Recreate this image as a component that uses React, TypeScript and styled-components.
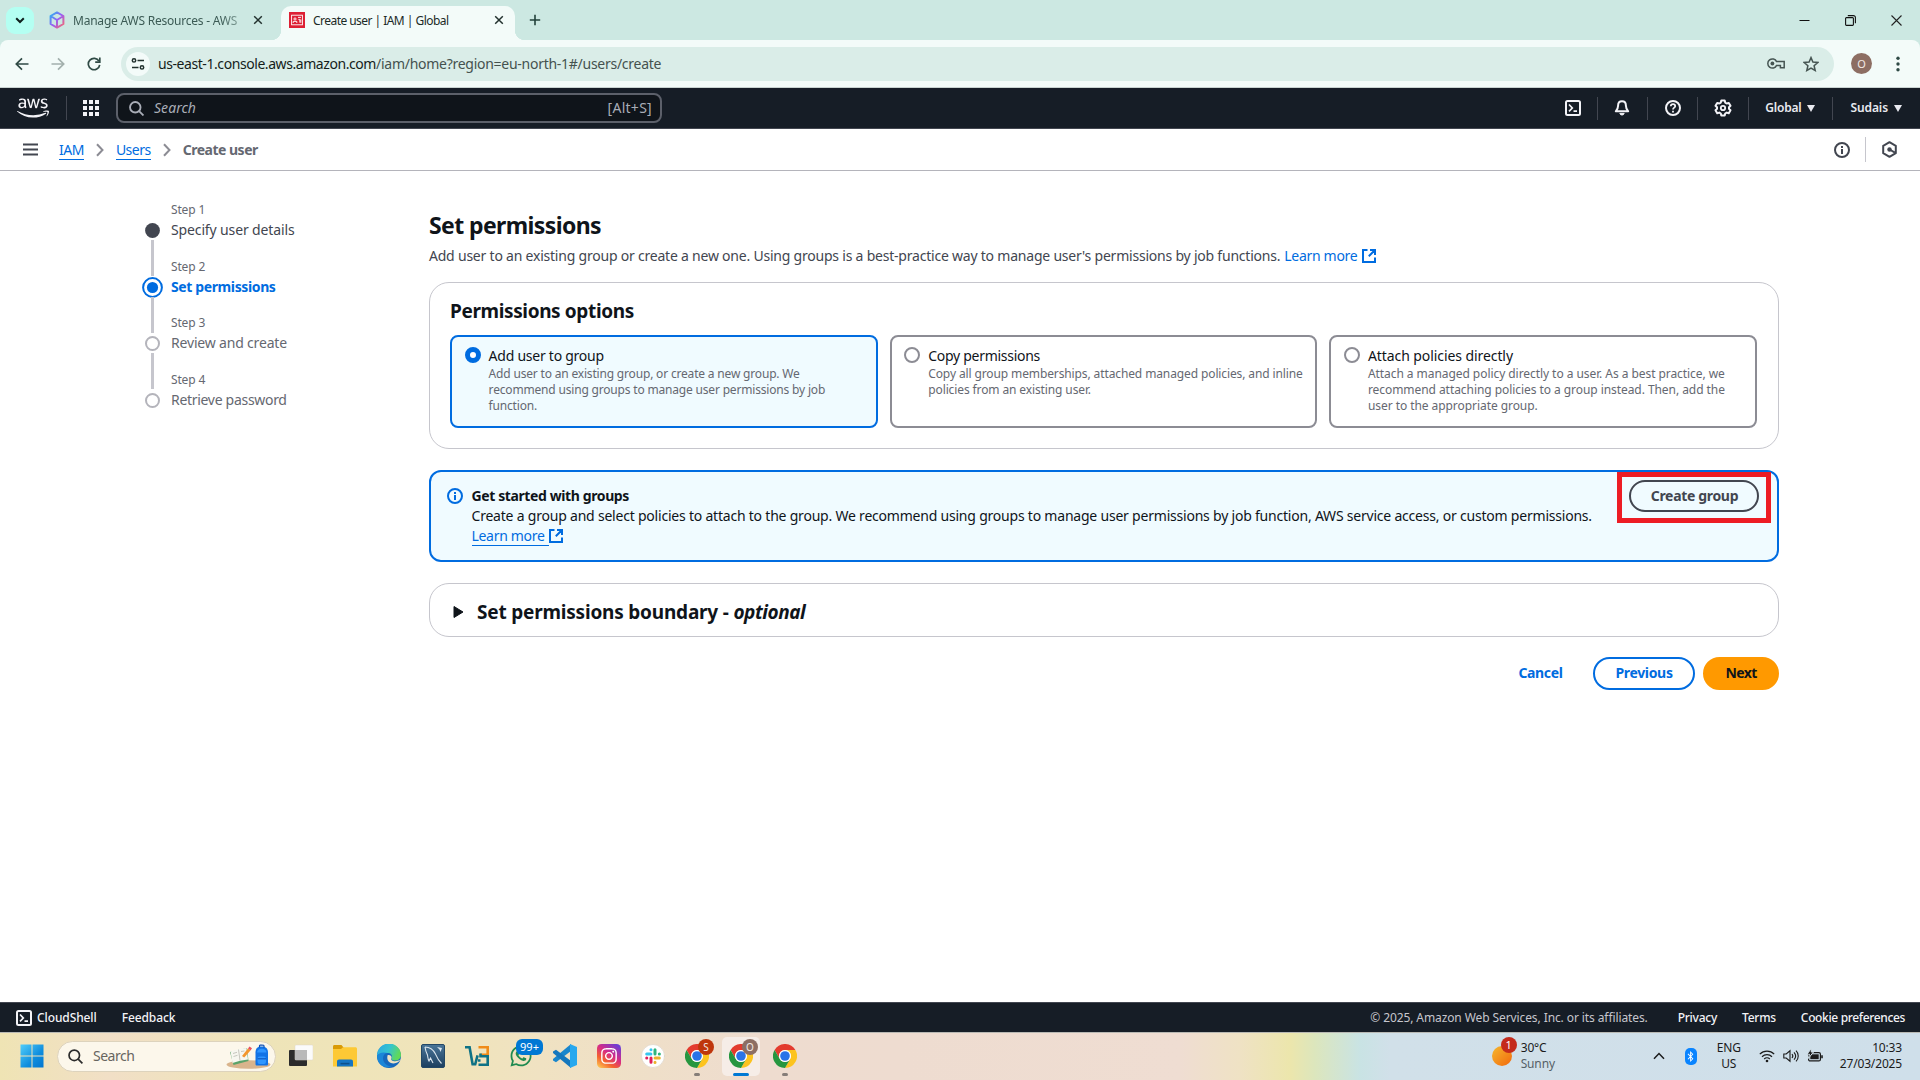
import React from 'react';
import styled, { createGlobalStyle, css } from 'styled-components';
import { FaAws, FaWhatsapp, FaInstagram, FaBluetoothB } from 'react-icons/fa';

const GlobalStyle = createGlobalStyle`
  *, *::before, *::after { box-sizing: border-box; }
  body { margin: 0; background: #fff; overflow: hidden; }
  svg { display: block; flex: none; }
`;

const type = (size: number, weight: number, color: string, spacing = 0, line = 20) => css`
  font-family: 'Noto Sans', 'Open Sans', sans-serif;
  font-size: ${size}px;
  font-weight: ${weight};
  color: ${color};
  letter-spacing: ${spacing}px;
  line-height: ${line}px;
  white-space: nowrap;
`;

const Screen = styled.div`
  width: 1920px;
  height: 1080px;
  display: flex;
  flex-direction: column;
  background: #fff;
`;

/* ---------- Browser window ---------- */

const TabStrip = styled.div`
  height: 40px;
  flex: none;
  display: flex;
  align-items: flex-end;
  background: #cce8e2;
  padding-left: 6px;
`;

const TabSearch = styled.div`
  width: 28px;
  height: 27px;
  border-radius: 9px;
  background: #b4fff2;
  display: flex;
  align-items: center;
  justify-content: center;
  margin: 0 7px 6px 0;
`;

const Tab = styled.div<{ $active?: boolean; $width: number; $end: number }>`
  position: relative;
  width: ${p => p.$width}px;
  height: 34px;
  display: flex;
  align-items: center;
  gap: 8px;
  padding: 0 ${p => p.$end}px 6px 8px;
  border-radius: 10px 10px 0 0;
  background: ${p => (p.$active ? '#f3fbf9' : 'transparent')};
  ${p => p.$active && css`
    &::before, &::after {
      content: '';
      position: absolute;
      bottom: 0;
      width: 10px;
      height: 10px;
    }
    &::before { left: -10px; background: radial-gradient(circle at 0 0, transparent 10px, #f3fbf9 10.5px); }
    &::after { right: -10px; background: radial-gradient(circle at 100% 0, transparent 10px, #f3fbf9 10.5px); }
  `}
`;

const TabTitle = styled.span<{ $fade?: boolean; $spacing: number }>`
  ${type(12, 400, '#1b2a27', 0, 18)}
  letter-spacing: ${p => p.$spacing}px;
  flex: 1;
  overflow: hidden;
  padding-top: 1px;
  ${p => p.$fade && css`
    color: #3c5b55;
    mask-image: linear-gradient(90deg, #000 86%, rgba(0, 0, 0, 0.3));
  `}
`;

const NewTab = styled.div`
  width: 40px;
  height: 34px;
  display: flex;
  justify-content: center;
  align-items: center;
  padding-bottom: 6px;
`;

const WindowButtons = styled.div`
  margin-left: auto;
  height: 40px;
  display: flex;
  align-items: center;
  gap: 35px;
  padding-right: 18px;
`;

const ToolbarBack = styled.div`
  background: #cce8e2;
  flex: none;
`;

const Toolbar = styled.div`
  height: 48px;
  display: flex;
  align-items: center;
  background: #f3fbf9;
  border-bottom: 1px solid #c9d3d1;
  border-radius: 8px 8px 0 0;
  padding-left: 15px;
  gap: 22px;
`;

const AddressBar = styled.div`
  margin-left: -2px;
  width: 1713px;
  height: 34px;
  border-radius: 17px;
  background: #daede8;
  display: flex;
  align-items: center;
  padding: 0 15px 0 5px;
`;

const SiteInfo = styled.div`
  width: 24px;
  height: 24px;
  border-radius: 50%;
  background: #f3fbf9;
  display: flex;
  align-items: center;
  justify-content: center;
  margin-right: 8px;
`;

const UrlHost = styled.span`${type(14, 400, '#151d1b', -0.43, 22)}`;
const UrlPath = styled.span`${type(14, 400, '#45524f', -0.27, 22)}`;

const AddressIcons = styled.div`
  margin-left: auto;
  display: flex;
  align-items: center;
  gap: 17px;
`;

const Avatar = styled.div<{ $size: number; $color: string; $font: number }>`
  ${type(11, 400, '#f3e9e6', 0, 14)}
  font-size: ${p => p.$font}px;
  width: ${p => p.$size}px;
  height: ${p => p.$size}px;
  border-radius: 50%;
  background: ${p => p.$color};
  display: flex;
  align-items: center;
  justify-content: center;
  flex: none;
`;

const ToolbarEnd = styled.div`
  display: flex;
  align-items: center;
  gap: 24px;
  margin-left: -5px;
`;

/* ---------- AWS header ---------- */

const AwsNav = styled.header`
  height: 41px;
  flex: none;
  display: flex;
  align-items: center;
  background: #161d26;
  border-bottom: 1px solid #424650;
  padding: 0 18px 0 17px;
  color: #f3f3f7;
`;

const Divider = styled.div<{ $height?: number; $color?: string; $x?: number }>`
  width: 1px;
  height: ${p => p.$height ?? 23}px;
  background: ${p => p.$color ?? '#424650'};
  margin: 0 ${p => p.$x ?? 16}px;
  flex: none;
`;

const NavSearch = styled.div`
  width: 546px;
  height: 30px;
  margin-left: 17px;
  border: 2px solid #5c606a;
  border-radius: 8px;
  background: #0f141a;
  display: flex;
  align-items: center;
  justify-content: space-between;
  padding: 0 8px 0 11px;
`;

const SearchHint = styled.span`
  ${type(14, 400, '#a9adb7', 0.04, 20)}
  display: flex;
  align-items: center;
  gap: 10px;
  font-style: italic;
`;
const Shortcut = styled.span`${type(14, 400, '#a9adb7', 0.28, 20)}`;

const NavRight = styled.div`
  margin-left: auto;
  display: flex;
  align-items: center;
`;

const NavMenu = styled.span<{ $spacing: number }>`
  ${type(12, 600, '#e9eaf0', 0, 20)}
  letter-spacing: ${p => p.$spacing}px;
  display: flex;
  align-items: center;
  gap: 6px;
`;

/* ---------- Breadcrumb bar ---------- */

const CrumbBar = styled.div`
  height: 42px;
  flex: none;
  display: flex;
  align-items: center;
  border-bottom: 1px solid #b4b4bb;
  padding: 0 22px 0 23px;
  color: #424650;
`;

const Crumbs = styled.nav`
  display: flex;
  align-items: center;
  margin-left: 21px;
  gap: 12px;
`;

const CrumbLink = styled.a`
  ${type(14, 400, '#006ce0', -0.5, 18)}
  border-bottom: 1px solid #006ce0;
  margin-top: 1px;
`;
const CrumbCurrent = styled.span`${type(14, 700, '#656871', -0.5, 20)}`;

const CrumbTools = styled.div`
  margin-left: auto;
  display: flex;
  align-items: center;
`;

/* ---------- Wizard ---------- */

const Page = styled.main`
  flex: 1;
  display: flex;
  align-items: flex-start;
  padding-left: 142px;
`;

const Steps = styled.ol`
  width: 287px;
  margin: 0;
  padding: 30px 0 0;
  list-style: none;
`;

const Step = styled.li`
  display: flex;
  gap: 8px;
  height: 56.7px;
`;

const StepMarker = styled.div`
  width: 21px;
  padding-top: 19px;
  display: flex;
  flex-direction: column;
  align-items: center;
`;

const StepLine = styled.div`
  width: 3px;
  height: 36px;
  margin-top: -1px;
  flex: none;
  background: #c6c6cd;
`;

const StepNumber = styled.div`${type(12, 400, '#656871', -0.15, 18)}`;

const StepTitle = styled.div<{ $state: string; $spacing: number }>`
  ${type(14, 400, '#656871', 0, 22)}
  letter-spacing: ${p => p.$spacing}px;
  ${p => p.$state === 'done' && css`color: #424650;`}
  ${p => p.$state === 'active' && css`color: #006ce0; font-weight: 700;`}
`;

const Content = styled.section`
  width: 1350px;
  padding-top: 39px;
`;

const Title = styled.h1`
  margin: 0;
  ${type(23, 700, '#0f141a', -0.6, 30)}
`;

const Intro = styled.p`
  margin: 5px 0 16px;
  display: flex;
  align-items: center;
  ${type(14, 400, '#424650', -0.216, 21)}
`;

const LearnMore = styled.a`
  ${type(14, 400, '#006ce0', -0.31, 20)}
  display: inline-flex;
  align-items: center;
  gap: 5px;
  margin-left: 4px;
`;

const Panel = styled.div`
  border: 1px solid #c6c6cd;
  border-radius: 20px;
  padding: 16px 21px 20px 20px;
`;

const PanelTitle = styled.h2`
  margin: 0 0 12px;
  ${type(19, 700, '#0f141a', -0.37, 24)}
`;

const Options = styled.div`
  display: grid;
  grid-template-columns: repeat(3, 1fr);
  gap: 12px;
`;

const OptionCard = styled.label<{ $selected?: boolean }>`
  height: 93px;
  border: 2px solid ${p => (p.$selected ? '#006ce0' : '#8c8c94')};
  border-radius: 8px;
  background: ${p => (p.$selected ? '#f0fbff' : '#fff')};
  display: flex;
  gap: 8px;
  padding: 8px 10px 0 12.6px;
`;

const Radio = styled.span<{ $selected?: boolean }>`
  width: 16px;
  height: 16px;
  margin-top: 2px;
  flex: none;
  border-radius: 50%;
  background: #fff;
  border: ${p => (p.$selected ? '5px solid #006ce0' : '2px solid #8c8c94')};
`;

const OptionLabel = styled.div<{ $spacing: number }>`
  ${type(14, 400, '#0f141a', 0, 21)}
  letter-spacing: ${p => p.$spacing}px;
`;
const OptionText = styled.div<{ $spacing: number }>`
  ${type(12, 400, '#656871', 0, 16)}
  letter-spacing: ${p => p.$spacing}px;
  white-space: pre-line;
`;

const Alert = styled.div`
  margin-top: 21px;
  height: 92px;
  border: 2px solid #006ce0;
  border-radius: 12px;
  background: #f0fbff;
  display: flex;
  align-items: flex-start;
  gap: 8.5px;
  padding: 14px 18px 0 16px;
`;

const AlertIcon = styled.div`
  padding-top: 2px;
  color: #006ce0;
`;
const AlertBody = styled.div`flex: 1;`;
const AlertTitle = styled.div`${type(14, 700, '#0f141a', -0.39, 20)}`;
const AlertText = styled.div`${type(14, 400, '#0f141a', -0.212, 20)}`;

const AlertLink = styled.a`
  ${type(14, 400, '#006ce0', -0.31, 20)}
  display: flex;
  align-items: center;
`;
const Underlined = styled.span`
  border-bottom: 1px solid #006ce0;
  line-height: 19px;
  padding-right: 4px;
`;

const Button = styled.button<{ $kind?: string; $width: number }>`
  ${type(14, 700, '#006ce0', -0.33, 20)}
  width: ${p => p.$width}px;
  height: 33px;
  padding: 0 0 1px;
  border-radius: 20px;
  border: 2px solid transparent;
  background: transparent;
  ${p => p.$kind === 'outline' && css`border-color: #006ce0; background: #fff;`}
  ${p => p.$kind === 'dark' && css`border-color: #424650; color: #424650; height: 32px; padding: 0 0 0 1px;`}
  ${p => p.$kind === 'primary' && css`background: #ff9900; border-color: #ff9900; color: #0f141a; letter-spacing: -0.6px;`}
`;

const Callout = styled.div`
  position: relative;
  margin-top: -6px;
  &::after {
    content: '';
    position: absolute;
    inset: -8px -12px -11px -12px;
    border: 5px solid #ed1c24;
  }
`;

const Boundary = styled.div`
  margin-top: 21px;
  height: 54px;
  border: 1px solid #c6c6cd;
  border-radius: 20px;
  display: flex;
  align-items: center;
  padding: 3px 0 0 23px;
  gap: 13px;
`;

const BoundaryTitle = styled.h2`
  margin: 0;
  ${type(19, 700, '#0f141a', -0.2, 24)}
  em { letter-spacing: -0.43px; }
`;

const Actions = styled.div`
  margin-top: 20px;
  display: flex;
  justify-content: flex-end;
  gap: 8px;
`;

/* ---------- AWS footer ---------- */

const Footer = styled.footer`
  height: 30px;
  flex: none;
  display: flex;
  align-items: center;
  background: #161d26;
  border-top: 1px solid #424650;
  padding: 0 15px 0 16px;
  color: #f3f3f7;
`;

const FooterLink = styled.span<{ $left?: number; $spacing?: number }>`
  ${type(12, 500, '#f3f3f7', 0, 20)}
  letter-spacing: ${p => p.$spacing ?? 0}px;
  margin-left: ${p => p.$left ?? 0}px;
  padding-top: 1px;
`;

const Copyright = styled.span`
  ${type(12, 400, '#c6c6cd', -0.097, 20)}
  margin-left: auto;
  padding-top: 1px;
`;

/* ---------- Windows taskbar ---------- */

const Taskbar = styled.div`
  height: 48px;
  flex: none;
  display: flex;
  align-items: center;
  border-top: 1px solid #b9b9b4;
  background: linear-gradient(90deg, #efe4b4 0, #f1dfc6 110px, #eee4b8 260px, #f0e4bb 460px, #f0e2c2 540px,
    #eedccf 760px, #eedcd0 900px, #efddd2 1180px, #efe2c4 1240px, #ece6ac 1290px, #dce6bd 1315px, #c9e3e4 1360px,
    #d1e0e9 1390px, #cfdfea 1920px);
  padding: 0 18px 1px 20px;
`;

const TaskSearch = styled.div`
  width: 219px;
  height: 31px;
  margin-left: 13px;
  border-radius: 16px;
  background: #fcf7eb;
  border: 1px solid #ddd3bd;
  display: flex;
  align-items: center;
  padding: 0 4px 0 10px;
  gap: 10px;
  color: #2b2b2b;
`;

const TaskSearchText = styled.span`
  ${type(14, 400, '#67655f', -0.5, 20)}
  flex: 1;
`;

const Apps = styled.div`
  display: flex;
  align-items: center;
  gap: 6px;
  margin-left: 6px;
`;

const TaskApp = styled.div<{ $active?: boolean }>`
  position: relative;
  width: 38px;
  height: 39px;
  border-radius: 5px;
  display: flex;
  align-items: center;
  justify-content: center;
  background: ${p => (p.$active ? '#f6ede7' : 'transparent')};
  svg { width: 24px; height: 24px; }
`;

const Running = styled.i<{ $active?: boolean }>`
  position: absolute;
  bottom: 0;
  left: 50%;
  transform: translateX(-50%);
  width: ${p => (p.$active ? 16 : 6)}px;
  height: 3px;
  border-radius: 2px;
  background: ${p => (p.$active ? '#0078d4' : '#857d78')};
`;

const CountBadge = styled.span`
  ${type(11, 400, '#fff', 0, 15)}
  position: absolute;
  top: 2px;
  left: 14px;
  width: 27px;
  height: 16px;
  border-radius: 6px;
  background: #0078d4;
  text-align: center;
`;

const ProfileBadge = styled.span`
  position: absolute;
  top: 2px;
  left: 20px;
`;

const Weather = styled.div`
  margin-left: auto;
  display: flex;
  align-items: center;
  gap: 9px;
  width: 161px;
`;

const Sun = styled.div`
  position: relative;
  width: 20px;
  height: 20px;
  border-radius: 50%;
  background: linear-gradient(135deg, #f5b82e, #f2680c);
`;

const SunBadge = styled.span`
  ${type(11, 400, '#fff', 0, 15)}
  position: absolute;
  left: 9px;
  top: -9px;
  width: 16px;
  height: 16px;
  border-radius: 50%;
  background: #c42b1c;
  text-align: center;
`;

const TrayText = styled.div<{ $align?: string }>`
  ${type(12, 400, '#1b1b1b', -0.16, 16)}
  text-align: ${p => p.$align ?? 'left'};
`;
const Muted = styled.span`color: #566067;`;

const Bluetooth = styled.div`
  width: 12px;
  height: 17px;
  margin: 0 20px;
  border-radius: 5px;
  background: #0a84ff;
  color: #fff;
  display: flex;
  align-items: center;
  justify-content: center;
  font-size: 11px;
`;

const TrayIcons = styled.div`
  display: flex;
  align-items: center;
  gap: 8px;
  margin: 0 17px 0 18px;
  color: #1b1b1b;
`;

/* ---------- Icons ---------- */

const Svg = ({ w, h, box, children }: { w: number; h?: number; box?: string; children: React.ReactNode }) => (
  <svg width={w} height={h ?? w} viewBox={box ?? '0 0 16 16'} fill="none" stroke="currentColor" strokeWidth="2">
    {children}
  </svg>
);

const Close = () => (
  <Svg w={10} box="0 0 10 10"><path d="M1.2 1.2l7.6 7.6M8.8 1.2L1.2 8.8" stroke="#22312e" strokeWidth="1.5" /></Svg>
);

const External = () => (
  <Svg w={14} box="0 0 14 14"><path d="M5.5 1H1v12h12V8.5M8 1h5v5M13 1L6.8 7.2" /></Svg>
);

const Terminal = () => (
  <Svg w={16}>
    <rect x="1" y="1" width="14" height="14" rx="1.5" />
    <path d="M4 4.5L7.3 8 4 11.3M8.5 11.2H12" strokeWidth="1.7" />
  </Svg>
);

const Info = () => (
  <Svg w={16}>
    <circle cx="8" cy="8" r="7" />
    <path d="M8 7v5M8 4v2" />
  </Svg>
);

const Magnifier = ({ width = 2 }: { width?: number }) => (
  <Svg w={15}><circle cx="6.7" cy="6.7" r="5.6" strokeWidth={width} /><path d="M10.8 10.8l4.6 4.6" strokeWidth={width} /></Svg>
);

const Chevron = () => (
  <Svg w={8} h={14} box="0 0 8 14"><path d="M1 1.2L6.5 7 1 12.8" stroke="#8c8c94" /></Svg>
);

const Caret = () => (
  <Svg w={8} h={7} box="0 0 8 7"><path d="M0 0h8L4 7z" fill="currentColor" stroke="none" /></Svg>
);

const Chrome = () => (
  <svg viewBox="0 0 24 24">
    <path d="M1.6 6A12 12 0 0 1 22.4 6H12A6 6 0 0 0 6.8 15z" fill="#e33b2e" />
    <path d="M22.4 6A12 12 0 0 1 12 24L17.2 15A6 6 0 0 0 12 6z" fill="#fcc31e" />
    <path d="M12 24A12 12 0 0 1 1.6 6L6.8 15A6 6 0 0 0 17.2 15z" fill="#26963f" />
    <circle cx="12" cy="12" r="6" fill="#fff" />
    <circle cx="12" cy="12" r="4.8" fill="#2a73e8" />
  </svg>
);

const Marker = ({ state }: { state: string }) => (
  <svg width="21" height="21" viewBox="0 0 21 21" fill="none">
    {state === 'done' && <circle cx="10.5" cy="10.5" r="7.4" fill="#424650" />}
    {state === 'active' && (
      <>
        <circle cx="10.5" cy="10.5" r="9.4" stroke="#006ce0" strokeWidth="2" />
        <circle cx="10.5" cy="10.5" r="5.6" fill="#006ce0" />
      </>
    )}
    {state === 'todo' && <circle cx="10.5" cy="10.5" r="6.5" stroke="#b4b4bb" strokeWidth="2" />}
  </svg>
);

const steps = [
  { title: 'Specify user details', state: 'done', spacing: -0.13 },
  { title: 'Set permissions', state: 'active', spacing: -0.38 },
  { title: 'Review and create', state: 'todo', spacing: -0.18 },
  { title: 'Retrieve password', state: 'todo', spacing: -0.3 },
];

const options = [
  {
    label: 'Add user to group',
    labelSpacing: -0.25,
    textSpacing: -0.18,
    text: 'Add user to an existing group, or create a new group. We\nrecommend using groups to manage user permissions by job\nfunction.',
  },
  {
    label: 'Copy permissions',
    labelSpacing: -0.28,
    textSpacing: -0.115,
    text: 'Copy all group memberships, attached managed policies, and inline\npolicies from an existing user.',
  },
  {
    label: 'Attach policies directly',
    labelSpacing: -0.08,
    textSpacing: -0.06,
    text: 'Attach a managed policy directly to a user. As a best practice, we\nrecommend attaching policies to a group instead. Then, add the\nuser to the appropriate group.',
  },
];

const BrowserChrome = () => (
  <>
    <TabStrip>
      <TabSearch>
        <Svg w={10} h={7} box="0 0 10 7"><path d="M1.2 1.2L5 5l3.8-3.8" stroke="#10201d" /></Svg>
      </TabSearch>
      <Tab $width={240} $end={18}>
        <svg width="16" height="18" viewBox="0 0 16 18" fill="none" strokeWidth="2" strokeLinejoin="round">
          <defs>
            <linearGradient id="cube" x1="0" y1="0" x2="1" y2="1">
              <stop offset="0" stopColor="#22b8f0" />
              <stop offset="0.5" stopColor="#9a5cf5" />
              <stop offset="1" stopColor="#fb6a6a" />
            </linearGradient>
          </defs>
          <path d="M8 1.4L14.4 5v8L8 16.6 1.6 13V5zM1.6 5L8 9l6.4-4M8 9v7.6" stroke="url(#cube)" />
        </svg>
        <TabTitle $fade $spacing={-0.22}>Manage AWS Resources - AWS</TabTitle>
        <Close />
      </Tab>
      <Tab $active $width={234} $end={11}>
        <svg width="16" height="16" viewBox="0 0 16 16" fill="none" stroke="#fff" strokeWidth="0.9">
          <rect width="16" height="16" fill="#dd2034" stroke="none" />
          <rect x="2.6" y="3.2" width="10.8" height="9.6" />
          <circle cx="6" cy="7" r="1.1" />
          <path d="M4.2 11V9.4h3.6V11M9 5.4h3M9.4 7.4h1.4v3.2M11.8 7.4v3.4" />
        </svg>
        <TabTitle $spacing={-0.54}>Create user | IAM | Global</TabTitle>
        <Close />
      </Tab>
      <NewTab>
        <Svg w={12} box="0 0 12 12"><path d="M6 .8v10.4M.8 6h10.4" stroke="#22413b" strokeWidth="1.6" /></Svg>
      </NewTab>
      <WindowButtons>
        <Svg w={11} box="0 0 11 11"><path d="M.5 5.5h10" stroke="#111" strokeWidth="1" /></Svg>
        <Svg w={11} box="0 0 11 11">
          <path d="M.6 3.4a.8.8 0 0 1 .8-.8h6.2a.8.8 0 0 1 .8.8v6.2a.8.8 0 0 1-.8.8H1.4a.8.8 0 0 1-.8-.8zM2.8.6h5.6a2 2 0 0 1 2 2v5.6" stroke="#111" strokeWidth="1.1" />
        </Svg>
        <Svg w={11} box="0 0 11 11"><path d="M.5.5l10 10M10.5.5l-10 10" stroke="#222" strokeWidth="1.1" /></Svg>
      </WindowButtons>
    </TabStrip>
    <ToolbarBack>
      <Toolbar>
        <Svg w={14} box="0 0 14 14"><path d="M13.5 7H1.5M7 1.3L1.3 7 7 12.7" stroke="#2f4a45" strokeWidth="1.7" /></Svg>
        <Svg w={14} box="0 0 14 14"><path d="M.5 7h12M7 1.3L12.7 7 7 12.7" stroke="#a3b0ad" strokeWidth="1.7" /></Svg>
        <Svg w={14} box="0 0 14 14">
          <path d="M12 4.2A5.7 5.7 0 1 0 12.7 7.8" stroke="#2f4a45" strokeWidth="1.7" />
          <path d="M12.8.6v4.6H8.2" stroke="#2f4a45" strokeWidth="1.7" />
        </Svg>
        <AddressBar>
          <SiteInfo>
            <Svg w={14} box="0 0 14 14">
              <circle cx="3" cy="3.4" r="1.7" stroke="#22312e" strokeWidth="1.5" />
              <circle cx="11" cy="10.4" r="1.7" stroke="#22312e" strokeWidth="1.5" />
              <path d="M6.5 3.4H13M1 10.4h6.5" stroke="#22312e" strokeWidth="1.5" />
            </Svg>
          </SiteInfo>
          <UrlHost>us-east-1.console.aws.amazon.com</UrlHost>
          <UrlPath>/iam/home?region=eu-north-1#/users/create</UrlPath>
          <AddressIcons>
            <Svg w={19} h={11} box="0 0 19 11">
              <path d="M9.6 3.6a4.6 4.6 0 1 0 0 3.8h3.8v2.3h3.8V3.6z" stroke="#465552" strokeWidth="1.5" />
              <circle cx="5.4" cy="5.5" r="1.9" fill="#465552" stroke="none" />
            </Svg>
            <Svg w={16}>
              <path d="M8 1.6l1.9 4.5 4.9.4-3.7 3.2 1.1 4.8L8 12l-4.2 2.5 1.1-4.8L1.2 6.5l4.9-.4z" stroke="#465552" strokeWidth="1.5" />
            </Svg>
          </AddressIcons>
        </AddressBar>
        <ToolbarEnd>
          <Avatar $size={21} $color="#8d6e63" $font={11}>O</Avatar>
          <Svg w={4} h={16} box="0 0 4 16">
            <g fill="#2f4a45" stroke="none"><circle cx="2" cy="2.2" r="1.7" /><circle cx="2" cy="8" r="1.7" /><circle cx="2" cy="13.8" r="1.7" /></g>
          </Svg>
        </ToolbarEnd>
      </Toolbar>
    </ToolbarBack>
  </>
);

const Header = () => (
  <AwsNav>
    <FaAws style={{ width: 32, height: 26 }} />
    <Divider $height={24} $x={16.5} />
    <svg width="16" height="16" viewBox="0 0 16 16" fill="currentColor">
      {[0, 6, 12].map(y => [0, 6, 12].map(x => <rect key={`${x}-${y}`} x={x} y={y} width="4" height="4" />))}
    </svg>
    <NavSearch>
      <SearchHint><Magnifier />Search</SearchHint>
      <Shortcut>[Alt+S]</Shortcut>
    </NavSearch>
    <NavRight>
      <Terminal />
      <Divider />
      <Svg w={16}>
        <path d="M8 1.2c-2.6 0-3.9 1.8-3.9 4.2 0 3-1 4.4-2.3 5.9h12.4c-1.3-1.5-2.3-2.9-2.3-5.9C11.9 3 10.6 1.2 8 1.2z" strokeLinejoin="round" />
        <path d="M5.8 13.4a2.3 2.3 0 0 0 4.4 0z" fill="currentColor" strokeWidth="1" />
      </Svg>
      <Divider $x={17} />
      <Svg w={16}>
        <circle cx="8" cy="8" r="7" />
        <path d="M5.8 6.3c0-1.3 1-2.1 2.2-2.1s2.2.8 2.2 2c0 1.4-2.2 1.5-2.2 3.3M8 10.8v1.6" strokeWidth="1.8" />
      </Svg>
      <Divider />
      <Svg w={18} box="0 0 18 18">
        <path d="M7.3 1.5h3.4l.5 2.1 1.5.9 2.1-.6 1.7 2.9L15 8.300v1.5l1.500 1.500-1.700 2.900-2.100-.6-1.500.9-.5 2H7.300l-.5-2-1.500-.9-2.100.6-1.700-2.900L3 9.800V8.300L1.500 6.800l1.700-2.900 2.100.6 1.500-.9z" strokeLinejoin="round" />
        <circle cx="9" cy="9" r="2.2" strokeWidth="1.8" />
      </Svg>
      <Divider />
      <NavMenu $spacing={-0.24}>Global <Caret /></NavMenu>
      <Divider $x={17} />
      <NavMenu $spacing={-0.08}>Sudais <Caret /></NavMenu>
    </NavRight>
  </AwsNav>
);

const Breadcrumb = () => (
  <CrumbBar>
    <Svg w={15} h={13} box="0 0 15 13"><path d="M0 1.5h15M0 6.5h15M0 11.5h15" /></Svg>
    <Crumbs>
      <CrumbLink>IAM</CrumbLink>
      <Chevron />
      <CrumbLink>Users</CrumbLink>
      <Chevron />
      <CrumbCurrent>Create user</CrumbCurrent>
    </Crumbs>
    <CrumbTools>
      <Info />
      <Divider $height={25} $color="#c6c6cd" $x={15} />
      <Svg w={17} box="0 0 17 17">
        <path d="M8.5 1.2l6.3 3.6v7.4l-6.3 3.6-6.3-3.6V4.8z" strokeLinejoin="round" />
        <circle cx="8.5" cy="8.5" r="2.2" fill="currentColor" stroke="none" />
        <path d="M8.5 8.5l5.5 3.2" />
      </Svg>
    </CrumbTools>
  </CrumbBar>
);

const Wizard = () => (
  <Page>
    <Steps>
      {steps.map((s, i) => (
        <Step key={s.title}>
          <StepMarker>
            <Marker state={s.state} />
            {i < steps.length - 1 && <StepLine />}
          </StepMarker>
          <div>
            <StepNumber>Step {i + 1}</StepNumber>
            <StepTitle $state={s.state} $spacing={s.spacing}>{s.title}</StepTitle>
          </div>
        </Step>
      ))}
    </Steps>
    <Content>
      <Title>Set permissions</Title>
      <Intro>
        Add user to an existing group or create a new one. Using groups is a best-practice way to manage user's permissions by job functions.
        <LearnMore>Learn more <External /></LearnMore>
      </Intro>
      <Panel>
        <PanelTitle>Permissions options</PanelTitle>
        <Options>
          {options.map((o, i) => (
            <OptionCard key={o.label} $selected={i === 0}>
              <Radio $selected={i === 0} />
              <div>
                <OptionLabel $spacing={o.labelSpacing}>{o.label}</OptionLabel>
                <OptionText $spacing={o.textSpacing}>{o.text}</OptionText>
              </div>
            </OptionCard>
          ))}
        </Options>
      </Panel>
      <Alert>
        <AlertIcon><Info /></AlertIcon>
        <AlertBody>
          <AlertTitle>Get started with groups</AlertTitle>
          <AlertText>
            Create a group and select policies to attach to the group. We recommend using groups to manage user permissions by job function, AWS service access, or custom permissions.
          </AlertText>
          <AlertLink><Underlined>Learn more</Underlined><External /></AlertLink>
        </AlertBody>
        <Callout><Button $kind="dark" $width={130}>Create group</Button></Callout>
      </Alert>
      <Boundary>
        <svg width="11" height="12" viewBox="0 0 11 12"><path d="M1 .5L10 6 1 11.5z" fill="#0f141a" stroke="#0f141a" strokeLinejoin="round" /></svg>
        <BoundaryTitle>Set permissions boundary - <em>optional</em></BoundaryTitle>
      </Boundary>
      <Actions>
        <Button $width={89}>Cancel</Button>
        <Button $kind="outline" $width={102}>Previous</Button>
        <Button $kind="primary" $width={76}>Next</Button>
      </Actions>
    </Content>
  </Page>
);

const WindowsTaskbar = () => (
  <Taskbar>
    <svg width="24" height="24" viewBox="0 0 24 24">
      <defs>
        <linearGradient id="win" x1="0" y1="0" x2="24" y2="24" gradientUnits="userSpaceOnUse">
          <stop offset="0" stopColor="#54d0fb" />
          <stop offset="0.6" stopColor="#0f8ddd" />
          <stop offset="1" stopColor="#0074cf" />
        </linearGradient>
      </defs>
      <path d="M.5.5h11v11H.5zM12.500.5h11v11h-11zM.5 12.500h11v11H.5zM12.500 12.500h11v11h-11z" fill="url(#win)" />
    </svg>
    <TaskSearch>
      <Magnifier width={1.8} />
      <TaskSearchText>Search</TaskSearchText>
      <svg width="45" height="25" viewBox="0 0 45 25">
        <ellipse cx="22.5" cy="20.5" rx="22" ry="4.3" fill="#d9b48c" />
        <path d="M4 8l17-4 1.500 13-15 4z" fill="#5aa36a" />
        <path d="M4.500 7.500l8.500-2.500 7.500-1 1.500 11.500-8 1.200L6.500 19z" fill="#f7f7f0" />
        <path d="M12.500 5.500l1.500 11M7 9.500l4-1.200M7.500 12.500l4-1.200M15 7.500l3.500-.5" stroke="#b9b9b0" strokeWidth=".8" />
        <path d="M16 12L22 4.500l2.500 2-6.300 7z" fill="#f3962d" />
        <path d="M22 4.500l1.500-2 2.500 1.800-1.500 2.200z" fill="#e8525f" />
        <path d="M29.500 20V8.500C29.500 4 32 2.500 35.500 2.500S42 4 42 8.500V20c0 1-.5 1.500-1.500 1.500H31c-1 0-1.500-.5-1.500-1.500z" fill="#1273e6" />
        <path d="M33.500 3.500V1.700c0-.9 4.500-.9 4.500 0v1.800" stroke="#0b4fb5" strokeWidth="1.2" fill="none" />
        <path d="M31 8.500c0-5 9.500-5 9.500 0z" fill="#2f96ff" />
        <rect x="31.500" y="12.500" width="8.500" height="7.500" rx="2" fill="#2f96ff" />
        <path d="M31.500 14.800h8.500" stroke="#0b4fb5" />
      </svg>
    </TaskSearch>
    <Apps>
      <TaskApp>
        <svg viewBox="0 0 24 24">
          <rect x="0" y="6" width="18" height="16" rx="1" fill="#2b2b2b" />
          <rect x="6" y="1" width="18" height="15" rx="1" fill="#fbfbfb" stroke="#ddd6c8" strokeWidth=".5" />
          <rect x="6" y="6" width="12" height="10" fill="#b9b9b9" />
        </svg>
      </TaskApp>
      <TaskApp>
        <svg viewBox="0 0 24 24">
          <path d="M0 2.5C0 1.7.5 1 1.5 1h7l2 2.500V8H0z" fill="#d99a06" />
          <path d="M0 5h8l2-1.700h12.500c.8 0 1.500.7 1.500 1.500V22.500H0z" fill="#fdc935" />
          <path d="M4 22.500v-5c0-1.200.8-2 2-2h12c1.200 0 2 .8 2 2v5z" fill="#1475c4" />
          <rect x="7.500" y="18.800" width="9" height="1.600" fill="#0b4f8c" />
        </svg>
      </TaskApp>
      <TaskApp>
        <svg viewBox="0 0 24 24">
          <defs>
            <linearGradient id="edgeTop" x1="0" y1="0" x2="1" y2=".35">
              <stop offset="0" stopColor="#2aa5e4" />
              <stop offset=".55" stopColor="#35c3d0" />
              <stop offset="1" stopColor="#5fd95a" />
            </linearGradient>
          </defs>
          <circle cx="12" cy="12" r="12" fill="#1668bd" />
          <path d="M0 12A12 12 0 0 1 24 11c0 3.500-2.700 5.500-5.800 5.500-2.600 0-4-1.200-3.500-2.300.7-1.500.3-5.200-4-5.200C5.500 8.500 1 10 0 12z" fill="url(#edgeTop)" />
          <path d="M10.500 9C6 9.500 5 14.500 7 18c1.500 2.700 4.500 4.600 8 4.600C8 25 0 21 0 12c1-3 6-4.500 10.500-3z" fill="#1b86d8" />
          <path d="M14.500 14c-1 2 1 3.300 3.700 3.300 1.800 0 3.800-.5 5.300-1.700-1 2.300-3.800 3.900-6.800 3.900-5 0-7.500-4-6-8.500 2.500-.5 4.500 1.200 3.800 3z" fill="#efe4c4" />
        </svg>
      </TaskApp>
      <TaskApp>
        <svg viewBox="0 0 24 24" fill="none">
          <defs>
            <linearGradient id="sql" x1="0" y1="0" x2="0" y2="1"><stop stopColor="#4a7598" /><stop offset="1" stopColor="#1c3f5f" /></linearGradient>
          </defs>
          <rect x=".5" y=".5" width="23" height="23" rx="1.5" fill="url(#sql)" stroke="#244866" />
          <path d="M4 3c4 0 8 2 10.500 7 1.500 3.500 2.500 6 6 9.500M4 3c.5 4 1.500 6 2.500 8 .5 3 .5 5 1.500 6l1.500-3 2.500 5" stroke="#dbe6ee" strokeWidth="1.1" />
          <path d="M16 3l5 1-1.500 4-1-2.500z" fill="#dbe6ee" />
        </svg>
      </TaskApp>
      <TaskApp>
        <svg viewBox="0 0 24 24" fill="none" strokeWidth="2.6">
          <path d="M0 3.300h4.600l3 17h2.600l2.400-9" stroke="#0e7285" />
          <path d="M13.500 3.300h9.200v7.500h-7.500" stroke="#f08b18" />
          <path d="M15.500 9.500v2.800h7.200v8.400h-9.200M15.500 16.500h-2.500" stroke="#0e7285" />
        </svg>
      </TaskApp>
      <TaskApp>
        <FaWhatsapp color="#1f8a50" />
        <CountBadge>99+</CountBadge>
      </TaskApp>
      <TaskApp>
        <svg viewBox="0 0 24 24">
          <path d="M18 0v7L3 18.300 0 16.500v-1.500z" fill="#1a86cc" />
          <path d="M18 24v-7L3 5.700 0 7.500V9z" fill="#1577bd" />
          <path d="M17 0l7 3v18l-7 3z" fill="#28a8ee" />
        </svg>
      </TaskApp>
      <TaskApp>
        <svg viewBox="0 0 24 24">
          <defs>
            <linearGradient id="insta" x1=".1" y1="1" x2=".8" y2="0">
              <stop offset="0" stopColor="#fdc552" />
              <stop offset=".3" stopColor="#f4622f" />
              <stop offset=".6" stopColor="#d62b86" />
              <stop offset="1" stopColor="#6b3ed6" />
            </linearGradient>
          </defs>
          <rect width="24" height="24" rx="4.5" fill="url(#insta)" />
          <FaInstagram x="3" y="3" color="#fff" style={{ width: 18, height: 18 }} />
        </svg>
      </TaskApp>
      <TaskApp>
        <svg viewBox="0 0 24 24" fill="none" strokeWidth="3" strokeLinecap="round">
          <circle cx="12" cy="12" r="11.5" fill="#fff" stroke="#d8d0c4" strokeWidth=".6" />
          <path d="M5.700 10h4.200M10 5.700v.1" stroke="#36c5f0" />
          <path d="M14 5.700v4.200M18.300 10h.1" stroke="#2eb67d" />
          <path d="M14.100 14h4.200M14 18.300v.1" stroke="#ecb22e" />
          <path d="M10 14.100v4.200M5.700 14h.1" stroke="#e01e5a" />
        </svg>
      </TaskApp>
      <TaskApp><Chrome /><ProfileBadge><Avatar $size={16} $color="#bf360c" $font={10}>S</Avatar></ProfileBadge><Running /></TaskApp>
      <TaskApp $active><Chrome /><ProfileBadge><Avatar $size={16} $color="#8d6e63" $font={10}>O</Avatar></ProfileBadge><Running $active /></TaskApp>
      <TaskApp><Chrome /><Running /></TaskApp>
    </Apps>
    <Weather>
      <Sun><SunBadge>1</SunBadge></Sun>
      <TrayText>30°C<br /><Muted>Sunny</Muted></TrayText>
    </Weather>
    <Svg w={12} h={8} box="0 0 12 8"><path d="M1 6.800L6 1.500l5 5.300" stroke="#1b1b1b" strokeWidth="1.5" /></Svg>
    <Bluetooth><FaBluetoothB /></Bluetooth>
    <TrayText $align="center">ENG<br />US</TrayText>
    <TrayIcons>
      <Svg w={16}>
        <g strokeWidth="1.2"><path d="M.8 6.200a10.200 10.200 0 0 1 14.400 0M3 8.700a7.200 7.200 0 0 1 10 0M5.200 11a4 4 0 0 1 5.600 0" /></g>
        <circle cx="8" cy="13" r="1.3" fill="currentColor" stroke="none" />
      </Svg>
      <Svg w={16}>
        <g strokeWidth="1.1"><path d="M.8 6v4h2.400L7 13.200V2.800L3.200 6zM9 6c1 1.200 1 2.800 0 4M11 4.300c2 2.200 2 5.200 0 7.400M13 2.700c3 3 3 7.600 0 10.600" /></g>
      </Svg>
      <Svg w={16}>
        <rect x="1.6" y="4.6" width="11.8" height="8.300" rx="1.5" strokeWidth="1.2" />
        <rect x="3.300" y="6.300" width="8.400" height="4.900" fill="currentColor" stroke="none" />
        <path d="M15 7.200v3" strokeWidth="1.6" />
        <path d="M4.800 0L0 6.200h2.500l-1.200 4.300L6.500 4H4.200z" fill="currentColor" stroke="#d1e0e9" strokeWidth="1" />
      </Svg>
    </TrayIcons>
    <TrayText $align="right">10:33<br />27/03/2025</TrayText>
  </Taskbar>
);

export default function App() {
  return (
    <Screen>
      <GlobalStyle />
      <BrowserChrome />
      <Header />
      <Breadcrumb />
      <Wizard />
      <Footer>
        <Terminal />
        <FooterLink $left={5} $spacing={-0.1}>CloudShell</FooterLink>
        <FooterLink $left={25} $spacing={-0.1}>Feedback</FooterLink>
        <Copyright>© 2025, Amazon Web Services, Inc. or its affiliates.</Copyright>
        <FooterLink $left={30} $spacing={-0.25}>Privacy</FooterLink>
        <FooterLink $left={25} $spacing={-0.25}>Terms</FooterLink>
        <FooterLink $left={25} $spacing={-0.35}>Cookie preferences</FooterLink>
      </Footer>
      <WindowsTaskbar />
    </Screen>
  );
}
